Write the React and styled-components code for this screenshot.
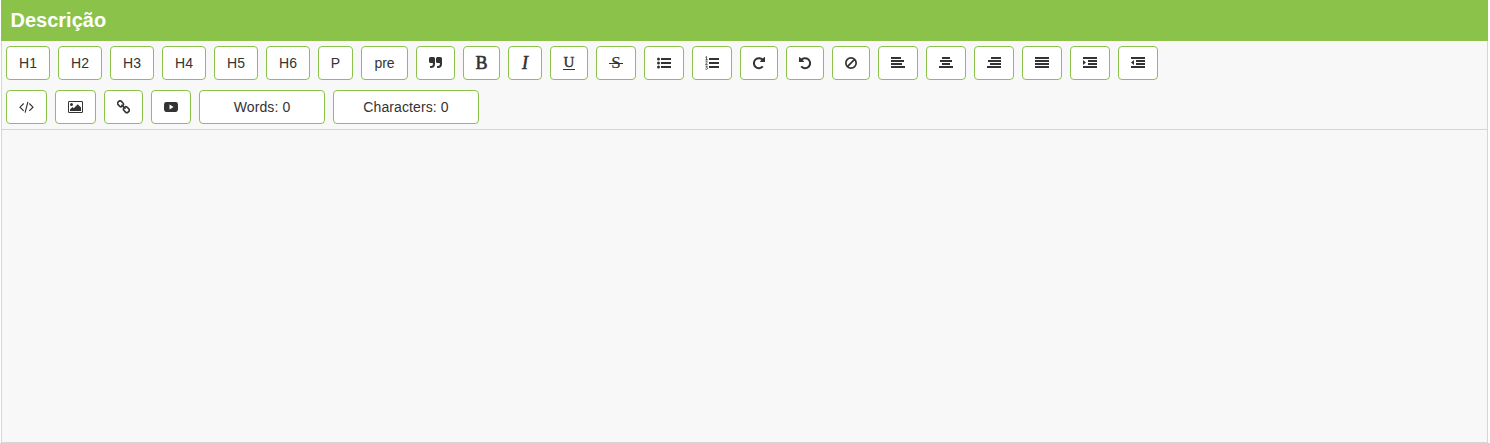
import React from 'react';
import styled, { createGlobalStyle } from 'styled-components';

const GlobalStyle = createGlobalStyle`
  * { box-sizing: border-box; }
  body { margin: 0; background: #fff; }
`;

const Page = styled.main`
  height: 443px;
  padding: 0 2px 0 1px;
  font-family: 'Liberation Sans', Arial, sans-serif;
  color: #333;
`;

const Header = styled.header`
  display: flex;
  align-items: center;
  height: 41px;
  padding: 0 9.5px 1px;
  background: #8bc34a;
`;

const Title = styled.h1`
  margin: 0;
  font-size: 20px;
  line-height: 24px;
  font-weight: 700;
  color: #fff;
`;

const Editor = styled.section`
  display: flex;
  flex-direction: column;
  height: 402px;
  border: 1px solid #d6d6d6;
  border-top: 0;
  background: #f8f8f8;
`;

const Toolbar = styled.div`
  display: flex;
  flex-direction: column;
  gap: 10px;
  height: 89px;
  padding: 5px 4px;
  border-bottom: 1px solid #d6d6d6;
`;

const Row = styled.div`
  display: flex;
  gap: 8px;
`;

const Button = styled.button`
  display: flex;
  align-items: center;
  justify-content: center;
  flex: none;
  width: ${(p) => p.$w}px;
  height: 34px;
  padding: 0;
  border: 1px solid #8bc34a;
  border-radius: 4px;
  background: #fff;
  color: #333;
  font: 14px/20px 'Liberation Sans', Arial, sans-serif;
`;

const Counter = styled(Button).attrs({ as: 'div' })`
  letter-spacing: 0.1px;
`;

const Letter = styled.span`
  font-family: 'Liberation Serif', 'Times New Roman', serif;
  font-size: ${(p) => p.$size || 17}px;
  line-height: 20px;
  font-weight: ${(p) => (p.$bold ? 700 : 400)};
  font-style: ${(p) => (p.$italic ? 'italic' : 'normal')};
  -webkit-text-stroke: ${(p) => p.$stroke || 0}px #333;
`;

const Underlined = styled(Letter)`
  line-height: 11px;
  height: 13px;
  padding: 0 0.5px;
  border-bottom: 1px solid #333;
`;

const Struck = styled(Letter)`
  width: 14px;
  text-align: center;
  background: linear-gradient(#333, #333) 0 10px / 14px 1px no-repeat;
`;

const Svg = styled.svg`
  display: block;
  flex: none;
  fill: #333;
`;

const TextArea = styled.div`
  flex: 1;
`;

const Icon = ({ w = 14, children }) => (
  <Svg width={w} height="14" viewBox={`0 0 ${w} 14`} aria-hidden="true">
    {children}
  </Svg>
);

// Each bar is [left, width]; bars are stacked three pixels apart.
const Bars = ({ bars, children }) => (
  <Icon>
    {bars.map(([x, w], i) => (
      <rect key={i} x={x} y={1 + i * 3} width={w} height="2" />
    ))}
    {children}
  </Icon>
);

const quoteMark =
  'M6 2.5v5.500a4 4 0 0 1-4 4h-.5a.5.5 0 0 1-.5-.5v-1a.5.5 0 0 1 .5-.5H2a2 2 0 0 0 2-2v-.25A.75.75 0 0 0 3.250 7H1.500A1.500 1.500 0 0 1 0 5.500v-3A1.500 1.500 0 0 1 1.500 1h3A1.500 1.500 0 0 1 6 2.500z';

const icons = {
  quote: (
    <Icon w={13}>
      <path d={quoteMark} />
      <path transform="translate(7 0)" d={quoteMark} />
    </Icon>
  ),
  ul: (
    <Icon>
      {[3, 7, 11].map((y) => (
        <g key={y}>
          <circle cx="1.500" cy={y} r="1.500" />
          <rect x="4" y={y - 1} width="10" height="2" />
        </g>
      ))}
    </Icon>
  ),
  ol: (
    <Icon>
      {[3, 7, 11].map((y) => (
        <rect key={y} x="4" y={y - 1} width="10" height="2" />
      ))}
      <g fill="none" stroke="#333" strokeWidth=".85">
        <path d="M.5 1.200L1.600.6V3.800M.4 3.900H2.800" />
        <path d="M.5 5.900C1 5 2.400 5.200 2.300 6.100S.6 7.500.6 8.400H2.700" />
        <path d="M.5 10.200H2.300L1.400 11.300C3 11.400 2.800 13.300 1.500 13.300Q.8 13.300.3 12.900" />
      </g>
    </Icon>
  ),
  redo: (
    <Icon w={12}>
      <path d="M10.100 4.400A5 5 0 1 0 9.800 10.300" fill="none" stroke="#333" strokeWidth="2" />
      <path d="M12 1.500v4a.5.5 0 0 1-.5.5h-4c-.45 0-.65-.5-.35-.85l4-4c.35-.3.85-.1.850.35z" />
    </Icon>
  ),
  undo: (
    <Icon w={12}>
      <path d="M1.900 4.400A5 5 0 1 1 2.200 10.300" fill="none" stroke="#333" strokeWidth="2" />
      <path d="M0 1.500v4a.5.5 0 0 0 .5.5h4c.45 0 .65-.5.35-.85l-4-4C.5.850 0 1.050 0 1.500z" />
    </Icon>
  ),
  ban: (
    <Icon w={12}>
      <g fill="none" stroke="#333" strokeWidth="1.700">
        <circle cx="6" cy="7" r="5.150" />
        <path d="M2.400 10.600l7.200-7.200" />
      </g>
    </Icon>
  ),
  left: <Bars bars={[[0, 10], [0, 13], [0, 11], [0, 14]]} />,
  center: <Bars bars={[[3, 8], [1, 12], [3, 8], [0, 14]]} />,
  right: <Bars bars={[[4, 10], [1, 13], [3, 11], [0, 14]]} />,
  justify: <Bars bars={[[0, 14], [0, 14], [0, 14], [0, 14]]} />,
  indent: (
    <Bars bars={[[0, 14], [5, 9], [5, 9], [0, 14]]}>
      <path d="M0 4v5l3-2.500z" />
    </Bars>
  ),
  outdent: (
    <Bars bars={[[0, 14], [5, 9], [5, 9], [0, 14]]}>
      <path d="M3 4v5L0 6.500z" />
    </Bars>
  ),
  code: (
    <Icon w={15}>
      <path d="M4.700 3.500L1 7.200l3.700 3.700M10.300 3.500L14 7.200l-3.700 3.700M8.900 1.800L6.100 12.600" fill="none" stroke="#333" strokeWidth="1.150" />
    </Icon>
  ),
  image: (
    <Icon w={15}>
      <rect x=".5" y="1.500" width="14" height="11" rx=".3" fill="none" stroke="#333" />
      <circle cx="3.500" cy="4.500" r="1.500" />
      <path d="M2 11V9.500L4.500 7l1.250 1.250 4-4L13 7.500V11z" />
    </Icon>
  ),
  link: (
    <Icon w={13}>
      <g fill="none" stroke="#333" strokeWidth="1.600">
        <rect x="-2.900" y="-2.300" width="5.800" height="4.600" rx="1.800" transform="translate(3.500 3.800) rotate(45)" />
        <rect x="-2.900" y="-2.300" width="5.800" height="4.600" rx="1.800" transform="translate(9.400 9.700) rotate(45)" />
        <path d="M4.400 4.700l4.100 4.100" />
      </g>
    </Icon>
  ),
  video: (
    <Icon>
      <path fillRule="evenodd" d="M2 2.100Q7 1.700 12 2.100Q13.700 2.300 13.900 4Q14.100 7 13.900 10Q13.700 11.700 12 11.900Q7 12.300 2 11.900Q.3 11.700.1 10Q-.1 7 .1 4Q.3 2.300 2 2.100zM5.500 4.500v5L9.600 7z" />
    </Icon>
  ),
};

const headings = ['H1', 'H2', 'H3', 'H4', 'H5', 'H6'];
const formats = [
  ['ul', 40], ['ol', 40], ['redo', 38], ['undo', 38], ['ban', 38],
  ['left', 40], ['center', 40], ['right', 40], ['justify', 40], ['indent', 40], ['outdent', 40],
];
const inserts = [['code', 41], ['image', 41], ['link', 39], ['video', 40]];

const IconButton = ({ name, w }) => (
  <Button type="button" $w={w}>{icons[name]}</Button>
);

export default function App() {
  return (
    <Page>
      <GlobalStyle />
      <Header><Title>Descrição</Title></Header>
      <Editor>
        <Toolbar>
          <Row>
            {headings.map((h) => <Button key={h} $w={44}>{h}</Button>)}
            <Button $w={35}>P</Button>
            <Button $w={47}>pre</Button>
            <IconButton name="quote" w={39} />
            <Button $w={37}><Letter $size={18} $stroke={0.6}>B</Letter></Button>
            <Button $w={34}><Letter $size={18} $italic $stroke={0.6}>I</Letter></Button>
            <Button $w={38}><Underlined $size={15} $stroke={0.4}>U</Underlined></Button>
            <Button $w={40}><Struck $size={17} $stroke={0.2}>S</Struck></Button>
            {formats.map(([n, w]) => <IconButton key={n} name={n} w={w} />)}
          </Row>
          <Row>
            {inserts.map(([n, w]) => <IconButton key={n} name={n} w={w} />)}
            <Counter $w={126}>Words: 0</Counter>
            <Counter $w={146}>Characters: 0</Counter>
          </Row>
        </Toolbar>
        <TextArea />
      </Editor>
    </Page>
  );
}
